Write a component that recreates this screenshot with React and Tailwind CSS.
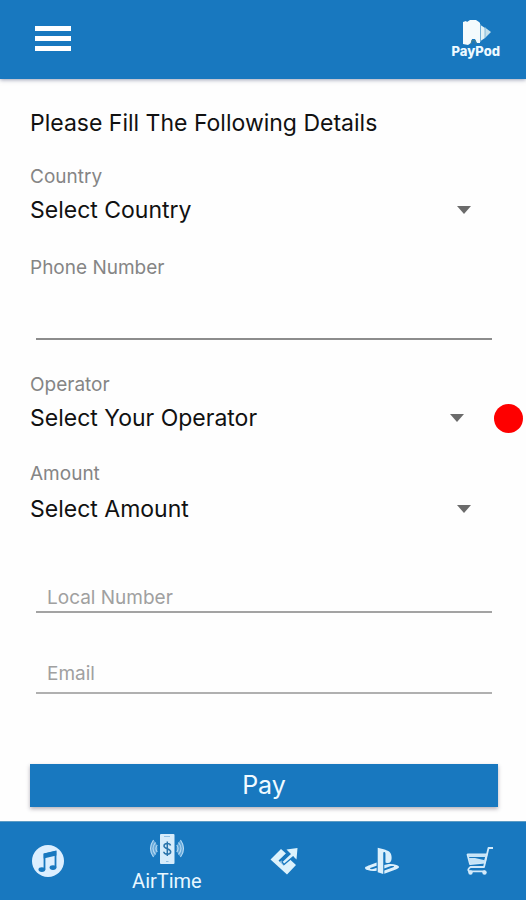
import { FaPlaystation } from "react-icons/fa";

function PodMark() {
  return (
    <svg viewBox="0 0 32 28" className="h-7 w-8" aria-hidden="true">
      <path d="M3 3 L6 2 L7 3 L10 1 L16 1 L19 3 L20 4 L20 24 L17 24 L15 20 L12 20 L11 24 L8 26 L3 25 Z" fill="#f4fbfd" />
      <path d="M20.500 6 L25 9 L25 19 L20.500 22 Z" fill="#e3f2f6" />
      <path d="M25 8.500 L31 13 L25 19 Z" fill="#c4e0ec" />
      <path d="M20.500 5 V23 M25 8 V19" stroke="#6fadd4" strokeWidth="0.8" />
      <path d="M11 25 L12 21.500 H15 L16 25" fill="none" stroke="#3f7f96" strokeWidth="1.200" />
    </svg>
  );
}

function MusicIcon() {
  return (
    <svg viewBox="0 0 32 32" className="size-8" aria-hidden="true">
      <circle cx="16" cy="16" r="16" fill="#dcefff" />
      <path d="M12.500 24.500 V9.500 L23.500 7 V22.500" fill="none" stroke="#1878bf" strokeWidth="1.800" />
      <path d="M11.600 8.500 L24.400 5.600 V10.600 L11.600 13.400 Z" fill="#1878bf" />
      <ellipse cx="9.900" cy="24.600" rx="3.400" ry="2.400" fill="#1878bf" />
      <ellipse cx="21" cy="22.600" rx="3.400" ry="2.400" fill="#1878bf" />
    </svg>
  );
}

function AirTimeIcon() {
  return (
    <svg viewBox="0 0 36 32" className="h-8 w-9" aria-hidden="true">
      <rect x="11" y="1" width="14.500" height="30" rx="1" fill="#d6ecfb" />
      <path d="M15 3.500 h6 M17 28.500 h2.500" stroke="#8fc0e4" strokeWidth="1" />
      <path d="M21.500 12.500 C21 9.800 15 9.800 15 13 C15 16 21.700 15.500 21.700 18.800 C21.700 22 15 22 14.800 18.800 M18.300 8.500 V23" fill="none" stroke="#2a74ab" strokeWidth="1.500" />
      <path d="M4.500 7 Q-2.500 15.500 4.500 24 Q8.500 20 8.500 15.500 Q8.500 11 4.500 7 Z M31.500 7 Q38.500 15.500 31.500 24 Q27.500 20 27.500 15.500 Q27.500 11 31.500 7 Z" fill="#8fc1e6" fillOpacity="0.65" />
      <g fill="none" stroke="#b5d9f3" strokeWidth="1.100">
        <path d="M4.500 7 Q-1.500 15.500 4.500 24 M6.500 9.500 Q1.500 15.500 6.500 21.500 M8.300 12 Q5.500 15.500 8.300 19" />
        <path d="M31.500 7 Q37.500 15.500 31.500 24 M29.500 9.500 Q34.500 15.500 29.500 21.500 M27.700 12 Q30.500 15.500 27.700 19" />
      </g>
    </svg>
  );
}

function TransferIcon() {
  return (
    <svg viewBox="0 0 28 28" className="size-7" aria-hidden="true">
      <path d="M0.500 12.500 L11 2 L16 6.500 L8.500 13.500 L13.500 18.500 L20 12.500 L26 18 L17 27.500 Z" fill="#dcf2fc" />
      <path d="M13 14.500 L21 7 L16.500 2.500 L27.500 1 L26.500 12.500 L23.500 9.500 L13.500 18.500 L10 15 L11.500 13.500 Z" fill="#dcf2fc" />
      <path d="M17 6.500 L13.500 10 L12 15 L14 17.500 L23.500 9.500" fill="none" stroke="#1878bf" strokeWidth="1.300" strokeLinejoin="round" />
    </svg>
  );
}

function CartIcon() {
  return (
    <svg viewBox="0 0 28 28" className="size-7" aria-hidden="true">
      <g fill="none" stroke="#d3eafa" strokeWidth="1.800" strokeLinejoin="round">
        <path d="M27 1 H22.500 L18 20 H4.500 Q1 22.500 3 24.300 H19" />
        <path d="M1.500 7.500 H20.500 L18.800 15.500 L4 17 Z" />
      </g>
      <path d="M2 7.500 H20 L19.500 10 H2.800 Z M3 11 H9 L18.800 13.200 L18.500 15.500 L4 17 Z" fill="#c6e4f7" />
      <circle cx="4.500" cy="25.500" r="2.200" fill="#d3eafa" />
      <circle cx="18.500" cy="25.500" r="2.200" fill="#d3eafa" />
    </svg>
  );
}

function Label({ htmlFor, className, children }) {
  return (
    <label htmlFor={htmlFor} className={`block text-[19px] leading-6 text-[#858585] ${className}`}>
      {children}
    </label>
  );
}

function Picker({ id, text, className, children }) {
  return (
    <div className={`flex items-center ${className}`}>
      <div className="relative flex-1">
        <select id={id} className="block h-9 w-full appearance-none bg-transparent text-[23px] text-[#111] outline-none">
          <option>{text}</option>
        </select>
        <svg viewBox="0 0 14 8" className="pointer-events-none absolute top-[14px] right-0 h-2 w-3.5" aria-hidden="true">
          <path d="M0 0 H14 L7 8 Z" fill="#6b6b6b" />
        </svg>
      </div>
      {children}
    </div>
  );
}

function NavItem({ label, children }) {
  return (
    <button type="button" aria-label={label} className="flex cursor-pointer items-center">
      {children}
    </button>
  );
}

export default function App() {
  return (
    <div className="flex min-h-screen flex-col bg-[#fefefe] font-['Inter','Liberation_Sans',sans-serif]">
      <header className="flex h-[79px] items-center justify-between bg-[#1878bf] pr-[26px] pb-0.5 pl-[35px] shadow-[0_1px_4px_rgba(60,70,110,0.5)]">
        <button type="button" aria-label="Menu" className="flex w-9 cursor-pointer flex-col gap-[5px]">
          <span className="h-[5px] bg-white" />
          <span className="h-[5px] bg-white" />
          <span className="h-[5px] bg-white" />
        </button>
        <div className="flex flex-col items-center">
          <PodMark />
          <span className="-mt-1 text-[13px] leading-4 font-extrabold text-[#eefaff]">PayPod</span>
        </div>
      </header>

      <main className="flex-1 pt-[30px] pr-7 pb-3.5 pl-[30px]">
        <h1 className="text-[23px] leading-7 text-[#111]">Please Fill The Following Details</h1>
        <form>
          <Label htmlFor="country" className="mt-7">Country</Label>
          <Picker id="country" text="Select Country" className="mt-[3px] pr-[27px]" />

          <Label htmlFor="phone" className="mt-7">Phone Number</Label>
          <div className="mx-1.5">
            <input id="phone" type="tel" className="block h-[60px] w-full border-b-2 border-[#8c8c8c] bg-transparent px-3 pt-4 text-[19px] outline-none" />
          </div>

          <Label htmlFor="operator" className="mt-[33px]">Operator</Label>
          <Picker id="operator" text="Select Your Operator" className="-mr-[25px] mt-[3px]">
            <span className="ml-[30px] size-[29px] rounded-full bg-[#fe0000]" />
          </Picker>

          <Label htmlFor="amount" className="mt-[26px]">Amount</Label>
          <Picker id="amount" text="Select Amount" className="mt-[5px] pr-[27px]" />

          <div className="mx-1.5 mt-[58px]">
            <input aria-label="Local Number" placeholder="Local Number" className="block h-7 w-full border-b-2 border-[#a3a3a3] bg-transparent px-[11px] text-[19px] outline-none placeholder:text-[#a0a0a0]" />
          </div>
          <div className="mx-1.5 mt-[45px]">
            <input type="email" aria-label="Email" placeholder="Email" className="block h-9 w-full border-b-2 border-[#b0b0b0] bg-transparent px-[11px] pb-1 text-[19px] outline-none placeholder:text-[#a0a0a0]" />
          </div>

          <button type="button" className="mt-[70px] block h-[43px] w-full cursor-pointer bg-[#1878bf] text-[25px] leading-none text-[#f0faff] shadow-[0_2px_4px_rgba(70,60,80,0.4)]">
            Pay
          </button>
        </form>
      </main>

      <nav className="flex h-[79px] items-center justify-between border-t border-[#5d9cc4] bg-[#1878bf] px-8">
        <NavItem label="Music"><MusicIcon /></NavItem>
        <button type="button" className="flex cursor-pointer flex-col items-center pt-1">
          <AirTimeIcon />
          <span className="mt-1 px-px font-[Roboto,'Liberation_Sans',sans-serif] text-[20px] leading-6 text-[#e8f7ff]">AirTime</span>
        </button>
        <NavItem label="Transfer"><TransferIcon /></NavItem>
        <NavItem label="PlayStation"><FaPlaystation className="size-[34px] text-[#dcf0fc]" /></NavItem>
        <NavItem label="Shop"><CartIcon /></NavItem>
      </nav>
    </div>
  );
}
